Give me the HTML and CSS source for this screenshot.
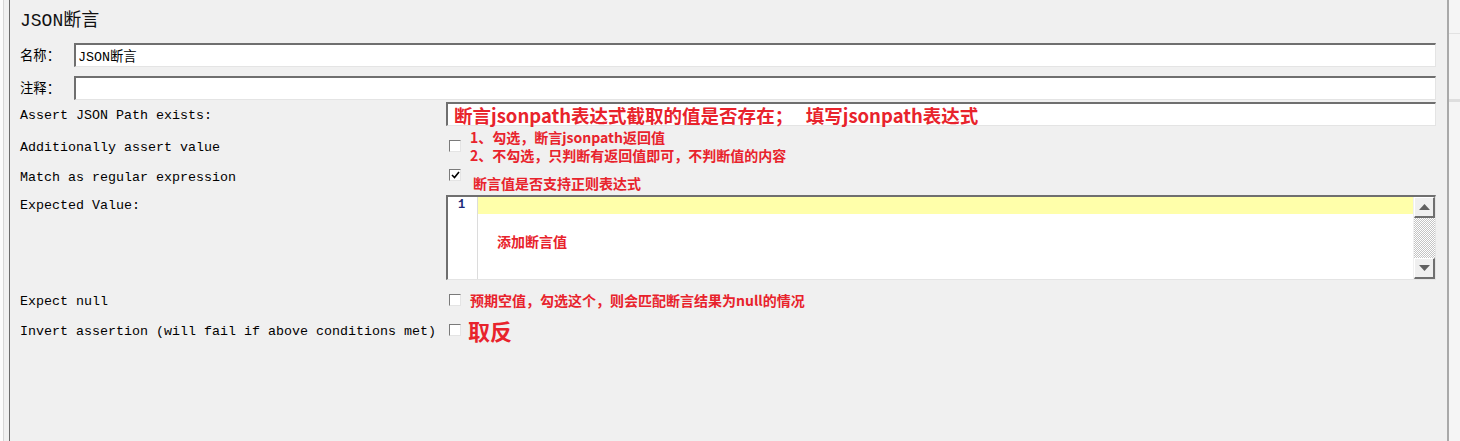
FILE: index.html
```html
<!DOCTYPE html>
<html lang="zh-CN">
<head>
<meta charset="utf-8">
<title>JSON断言</title>
<link rel="stylesheet" href="styles.css">
</head>
<body>
<div class="frame">
  <div class="left-rail"></div>
  <main class="panel">
    <div class="title">JSON断言</div>

    <div class="row row-field first">
      <div class="cn-label">名称：</div>
      <div class="input"><span class="mono">JSON断言</span></div>
    </div>
    <div class="row row-field second">
      <div class="cn-label">注释：</div>
      <div class="input"></div>
    </div>

    <div class="row row-path">
      <div class="label">Assert JSON Path exists:</div>
      <div class="input wide"><span class="note big">断言jsonpath表达式截取的值是否存在；&nbsp;&nbsp; 填写jsonpath表达式</span></div>
    </div>

    <div class="row row-add">
      <div class="label">Additionally assert value</div>
      <div class="value">
        <span class="checkbox"></span>
        <div class="note two-lines">
          <div>1、勾选，断言jsonpath返回值</div>
          <div>2、不勾选，只判断有返回值即可，不判断值的内容</div>
        </div>
      </div>
    </div>

    <div class="row row-regex">
      <div class="label">Match as regular expression</div>
      <div class="value top">
        <span class="checkbox checked"><svg width="9" height="9" viewBox="0 0 9 9"><path d="M1 4 L3.5 6.5 L8 1" fill="none" stroke="#000" stroke-width="1.6"/></svg></span>
        <span class="note regex-note">断言值是否支持正则表达式</span>
      </div>
    </div>

    <div class="row row-expected">
      <div class="label">Expected Value:</div>
      <div class="editor">
        <div class="gutter"><span class="lineno">1</span></div>
        <div class="code">
          <div class="current-line"></div>
          <div class="note editor-note">添加断言值</div>
        </div>
        <div class="scrollbar">
          <div class="sb-btn"><svg width="11" height="6" viewBox="0 0 11 6"><path d="M5.5 0 L11 6 L0 6 Z" fill="#606060"/></svg></div>
          <div class="sb-track"></div>
          <div class="sb-btn"><svg width="11" height="6" viewBox="0 0 11 6"><path d="M0 0 L11 0 L5.5 6 Z" fill="#606060"/></svg></div>
        </div>
      </div>
    </div>

    <div class="row row-check">
      <div class="label">Expect null</div>
      <div class="value">
        <span class="checkbox"></span>
        <span class="note">预期空值，勾选这个，则会匹配断言结果为null的情况</span>
      </div>
    </div>

    <div class="row row-check">
      <div class="label">Invert assertion (will fail if above conditions met)</div>
      <div class="value">
        <span class="checkbox"></span>
        <span class="note huge">取反</span>
      </div>
    </div>
  </main>
  <div class="right-rail">
    <div class="rr-top"></div>
    <div class="rr-mid"></div>
    <div class="rr-rest"></div>
  </div>
</div>
</body>
</html>
```

FILE: styles.css
```css
html, body {
  margin: 0;
  padding: 0;
  height: 100%;
  background: #f0f0f0;
}

.frame {
  display: flex;
  height: 441px;
  overflow: hidden;
}

.left-rail {
  width: 10px;
  flex: none;
  background: linear-gradient(to right, #fbfbfb 0 3px, #d6d6d6 3px 4px, #f0f0f0 4px 9px, #6b6b6b 9px 10px);
}

.panel {
  flex: 1;
  padding: 0 11px 0 10px;
  background: #f0f0f0;
  font-family: "Liberation Mono", "Noto Sans CJK SC", monospace;
  font-size: 13.33px;
  color: #000;
}

.right-rail {
  width: 11px;
  flex: none;
  border-left: 2px solid #a9a9a9;
  display: flex;
  flex-direction: column;
  background: #f5f5f5;
}
.rr-top { height: 33px; border-bottom: 1px solid #e2e2e2; }
.rr-mid { height: 65px; border-bottom: 3px solid #dedede; }
.rr-rest { flex: 1; }

.title {
  box-sizing: border-box;
  height: 33px;
  padding-top: 10px;
  font-family: "Liberation Mono", "Noto Sans CJK SC", monospace;
  font-size: 18px;
  line-height: 22px;
  color: #111;
}

.row {
  display: flex;
  align-items: center;
}

.row-field { height: 24px; }
.row-field.first { margin-top: 10px; }
.row-field.second { margin-top: 9px; }

.cn-label {
  width: 54px;
  flex: none;
  font-family: "Noto Sans CJK SC", sans-serif;
  font-size: 13.33px;
  line-height: 20px;
}

.label {
  width: 426px;
  flex: none;
  line-height: 20px;
  white-space: nowrap;
  margin-top: 4px;
}

.input {
  flex: 1;
  box-sizing: border-box;
  height: 24px;
  background: #fff;
  border-style: solid;
  border-width: 2px 1px 1px 2px;
  border-color: #6f6f6f #e4e4e4 #e4e4e4 #6f6f6f;
  padding: 0 4px 0 2px;
  display: flex;
  align-items: center;
}

.mono {
  font-family: "Liberation Mono", "Noto Sans CJK SC", monospace;
  font-size: 13.33px;
}

.row-path { margin-top: 2px; height: 24px; }
.row-path .input { padding-left: 6px; }

.note {
  font-family: "Noto Sans CJK SC", sans-serif;
  font-weight: 700;
  color: #e8232c;
  font-size: 14px;
  line-height: 18px;
  white-space: nowrap;
}
.note.big { font-size: 18.5px; line-height: 20px; }
.note.huge { font-size: 22px; line-height: 26px; margin-left: -2px; }

.value {
  flex: 1;
  display: flex;
  align-items: center;
  gap: 9px;
}
.value.top { align-items: flex-start; }

.checkbox {
  box-sizing: border-box;
  width: 12px;
  height: 12px;
  margin-left: 3px;
  flex: none;
  background: #fff;
  border-style: solid;
  border-width: 1px;
  border-color: #7a7a7a #e4e4e4 #e4e4e4 #7a7a7a;
  display: flex;
  align-items: center;
  justify-content: center;
}

.row-add { height: 40px; }

.row-regex {
  height: 28px;
  align-items: flex-start;
}
.row-regex .label { margin-top: 2px; }
.row-regex .checkbox { margin-top: 3px; }
.regex-note { margin-top: 8px; margin-left: 3px; }

.row-expected {
  margin-top: 1px;
  align-items: flex-start;
}
.row-expected .label { margin-top: 1px; }

.editor {
  flex: 1;
  box-sizing: border-box;
  height: 85px;
  display: flex;
  background: #fff;
  border-style: solid;
  border-width: 2px 1px 1px 2px;
  border-color: #6f6f6f #e4e4e4 #e4e4e4 #6f6f6f;
}

.gutter {
  width: 29px;
  flex: none;
  border-right: 1px solid #dcdcdc;
  display: flex;
  justify-content: center;
}
.lineno {
  font-family: "Liberation Mono", monospace;
  font-weight: 700;
  font-size: 12px;
  line-height: 17px;
  color: #1c2a78;
  margin-left: -2px;
}

.code { flex: 1; }
.current-line {
  height: 17px;
  background: #ffffaa;
}
.editor-note {
  margin: 18px 0 0 19px;
}

.scrollbar {
  width: 21px;
  flex: none;
  display: flex;
  flex-direction: column;
  border-left: 1px solid #f0f0f0;
}
.sb-btn {
  box-sizing: border-box;
  height: 21px;
  background: #efefef;
  border-style: solid;
  border-width: 1px 2px 2px 1px;
  border-color: #ffffff #6f6f6f #6f6f6f #ffffff;
  display: flex;
  align-items: center;
  justify-content: center;
}
.sb-track {
  flex: 1;
  background: repeating-conic-gradient(#c4c4c4 0 25%, #ffffff 0 50%) 0 0 / 2px 2px;
}

.row-check { height: 30px; }
.row-expected + .row-check { margin-top: 5px; }
```
